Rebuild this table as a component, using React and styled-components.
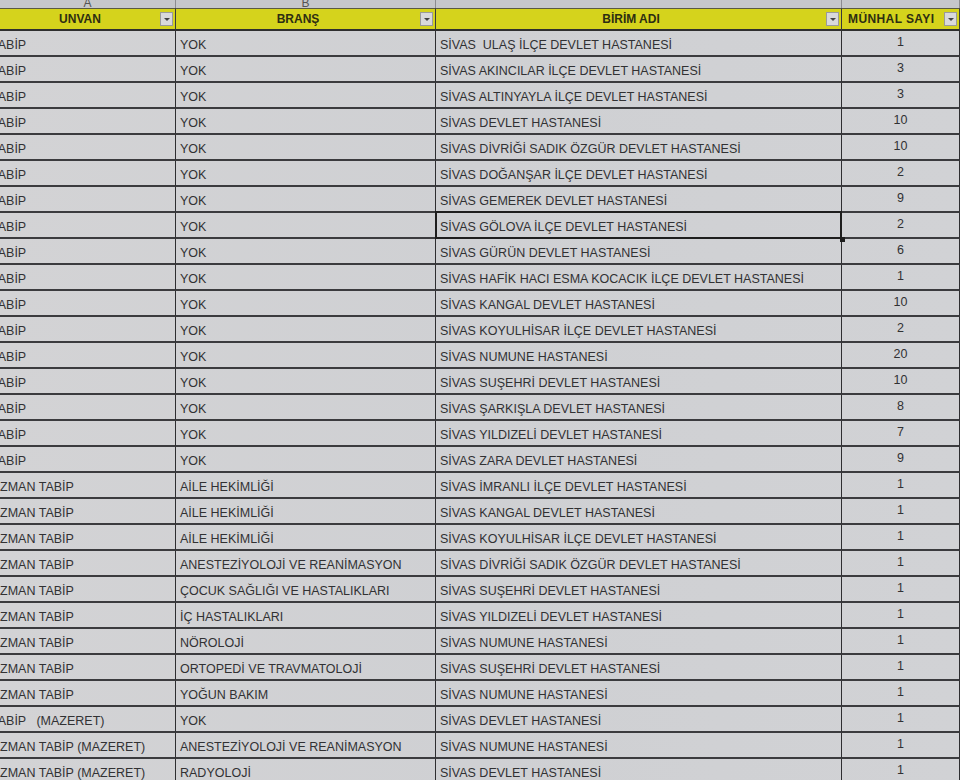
import React from 'react';
import styled, { createGlobalStyle, css } from 'styled-components';

const GlobalStyle = createGlobalStyle`
  html, body {
    margin: 0;
    padding: 0;
    background: #cfd0d3;
    overflow: hidden;
  }
`;

const rows = [
  ['TABİP', 'YOK', 'SİVAS  ULAŞ İLÇE DEVLET HASTANESİ', 1],
  ['TABİP', 'YOK', 'SİVAS AKINCILAR İLÇE DEVLET HASTANESİ', 3],
  ['TABİP', 'YOK', 'SİVAS ALTINYAYLA İLÇE DEVLET HASTANESİ', 3],
  ['TABİP', 'YOK', 'SİVAS DEVLET HASTANESİ', 10],
  ['TABİP', 'YOK', 'SİVAS DİVRİĞİ SADIK ÖZGÜR DEVLET HASTANESİ', 10],
  ['TABİP', 'YOK', 'SİVAS DOĞANŞAR İLÇE DEVLET HASTANESİ', 2],
  ['TABİP', 'YOK', 'SİVAS GEMEREK DEVLET HASTANESİ', 9],
  ['TABİP', 'YOK', 'SİVAS GÖLOVA İLÇE DEVLET HASTANESİ', 2, true],
  ['TABİP', 'YOK', 'SİVAS GÜRÜN DEVLET HASTANESİ', 6],
  ['TABİP', 'YOK', 'SİVAS HAFİK HACI ESMA KOCACIK İLÇE DEVLET HASTANESİ', 1],
  ['TABİP', 'YOK', 'SİVAS KANGAL DEVLET HASTANESİ', 10],
  ['TABİP', 'YOK', 'SİVAS KOYULHİSAR İLÇE DEVLET HASTANESİ', 2],
  ['TABİP', 'YOK', 'SİVAS NUMUNE HASTANESİ', 20],
  ['TABİP', 'YOK', 'SİVAS SUŞEHRİ DEVLET HASTANESİ', 10],
  ['TABİP', 'YOK', 'SİVAS ŞARKIŞLA DEVLET HASTANESİ', 8],
  ['TABİP', 'YOK', 'SİVAS YILDIZELİ DEVLET HASTANESİ', 7],
  ['TABİP', 'YOK', 'SİVAS ZARA DEVLET HASTANESİ', 9],
  ['UZMAN TABİP', 'AİLE HEKİMLİĞİ', 'SİVAS İMRANLI İLÇE DEVLET HASTANESİ', 1],
  ['UZMAN TABİP', 'AİLE HEKİMLİĞİ', 'SİVAS KANGAL DEVLET HASTANESİ', 1],
  ['UZMAN TABİP', 'AİLE HEKİMLİĞİ', 'SİVAS KOYULHİSAR İLÇE DEVLET HASTANESİ', 1],
  ['UZMAN TABİP', 'ANESTEZİYOLOJİ VE REANİMASYON', 'SİVAS DİVRİĞİ SADIK ÖZGÜR DEVLET HASTANESİ', 1],
  ['UZMAN TABİP', 'ÇOCUK SAĞLIĞI VE HASTALIKLARI', 'SİVAS SUŞEHRİ DEVLET HASTANESİ', 1],
  ['UZMAN TABİP', 'İÇ HASTALIKLARI', 'SİVAS YILDIZELİ DEVLET HASTANESİ', 1],
  ['UZMAN TABİP', 'NÖROLOJİ', 'SİVAS NUMUNE HASTANESİ', 1],
  ['UZMAN TABİP', 'ORTOPEDİ VE TRAVMATOLOJİ', 'SİVAS SUŞEHRİ DEVLET HASTANESİ', 1],
  ['UZMAN TABİP', 'YOĞUN BAKIM', 'SİVAS NUMUNE HASTANESİ', 1],
  ['TABİP   (MAZERET)', 'YOK', 'SİVAS DEVLET HASTANESİ', 1],
  ['UZMAN TABİP (MAZERET)', 'ANESTEZİYOLOJİ VE REANİMASYON', 'SİVAS NUMUNE HASTANESİ', 1],
  ['UZMAN TABİP (MAZERET)', 'RADYOLOJİ', 'SİVAS DEVLET HASTANESİ', 1]
];

const Sheet = styled.div`
  display: grid;
  grid-template-columns: 176px 260px 406px 118px;
  width: 960px;
  height: 780px;
  overflow: hidden;
  font-family: 'Liberation Sans', Arial, sans-serif;
  background: linear-gradient(90deg, #d3d3d5 0%, #cfd0d3 50%, #d1d2d5 100%);
  color: #313133;
`;

const Letter = styled.div`
  height: 9px;
  overflow: hidden;
  background: #c6c7ca;
  border-right: 1px solid #8c8c90;
  display: flex;
  justify-content: center;
  align-items: flex-end;
  font-size: 12px;
  line-height: 12px;
  color: #555;
  margin-bottom: -1px;
`;

const HeadCell = styled.div`
  height: 20px;
  background: #d5d31c;
  border-top: 1px solid #5a5a40;
  border-bottom: 2px solid #2f2f2f;
  border-right: 1px solid #3a3a3a;
  display: flex;
  align-items: center;
  padding-right: 2px;
  overflow: hidden;
  font-weight: 700;
  font-size: 12px;
  color: #2e2e12;
  white-space: nowrap;
`;

const HeadLabel = styled.span`
  flex: 1;
  text-align: ${p => (p.$left ? 'left' : 'center')};
  padding-left: ${p => (p.$left ? '6px' : '0')};
  letter-spacing: ${p => (p.$left ? '0.4px' : '0')};
  overflow: hidden;
`;

const FilterButton = styled.span`
  width: 13px;
  height: 14px;
  flex: none;
  background: #d9d9db;
  border: 1px solid #9a9a9a;
  box-sizing: border-box;
  display: flex;
  align-items: center;
  justify-content: center;

  &:after {
    content: '';
    border-left: 3px solid transparent;
    border-right: 3px solid transparent;
    border-top: 3px solid #444;
  }
`;

const Cell = styled.div`
  position: relative;
  height: 26px;
  box-sizing: border-box;
  border-bottom: 2px solid #3b3b3e;
  border-right: 1px solid #2e2e31;
  display: flex;
  align-items: flex-end;
  padding: 0 4px 2px;
  font-size: 12.5px;
  line-height: 16px;
  white-space: pre;
  overflow: hidden;

  ${p =>
    p.$clipped &&
    css`
      padding-left: 0;
      text-indent: -9px;
    `}

  ${p =>
    p.$number &&
    css`
      justify-content: center;
      align-items: flex-start;
      padding: 3px 0 0;
    `}

  ${p =>
    p.$selected &&
    css`
      overflow: visible;
      &:before {
        content: '';
        position: absolute;
        left: -1px;
        top: -2px;
        right: -1px;
        bottom: -2px;
        border: 2px solid #1e1e1e;
        pointer-events: none;
      }
      &:after {
        content: '';
        position: absolute;
        right: -4px;
        bottom: -5px;
        width: 5px;
        height: 5px;
        background: #1e1e1e;
        z-index: 1;
      }
    `}
`;

const headers = [
  { letter: 'A', label: 'UNVAN' },
  { letter: 'B', label: 'BRANŞ' },
  { letter: 'C', label: 'BİRİM ADI' },
  { letter: 'D', label: 'MÜNHAL SAYI', left: true }
];

export default function App() {
  return (
    <>
      <GlobalStyle />
      <Sheet>
        {headers.map(h => (
          <Letter key={h.letter}>{h.letter === 'A' || h.letter === 'B' ? h.letter : ''}</Letter>
        ))}
        {headers.map(h => (
          <HeadCell key={h.label}>
            <HeadLabel $left={h.left}>{h.label}</HeadLabel>
            <FilterButton />
          </HeadCell>
        ))}
        {rows.map(([unvan, brans, birim, sayi, selected], i) => (
          <React.Fragment key={i}>
            <Cell $clipped>{unvan}</Cell>
            <Cell>{brans}</Cell>
            <Cell $selected={selected}>{birim}</Cell>
            <Cell $number>{sayi}</Cell>
          </React.Fragment>
        ))}
      </Sheet>
    </>
  );
}
